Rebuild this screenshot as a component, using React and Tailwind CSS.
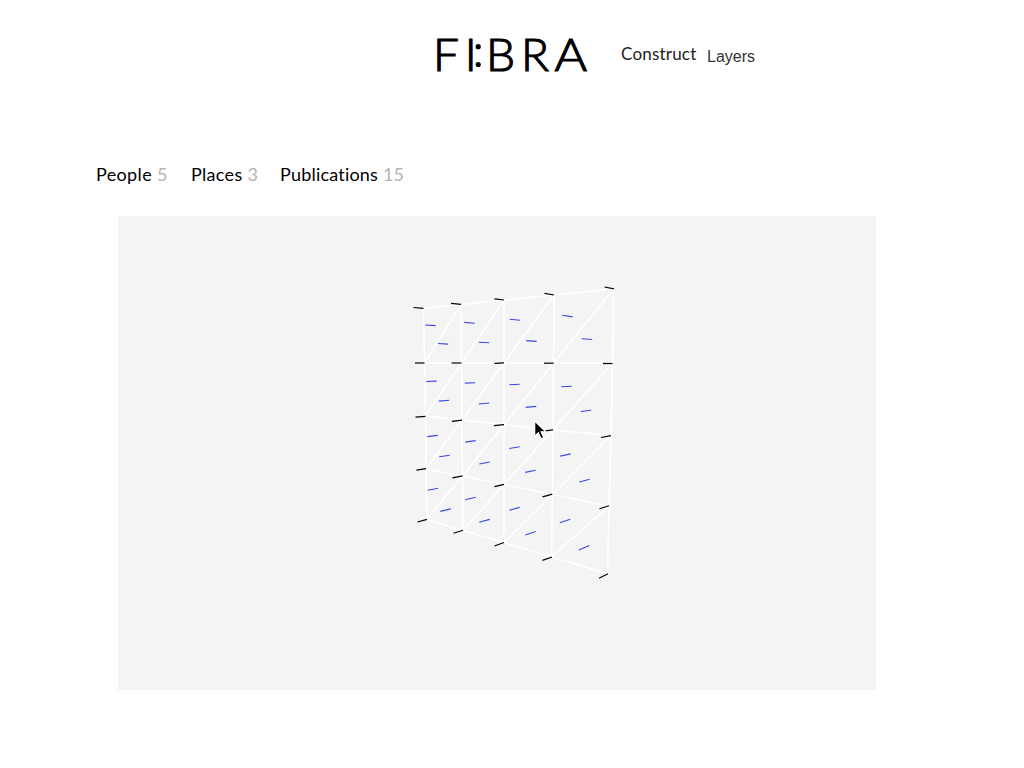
const vertices = [
  [[423.5, 308.5], [461, 304.5], [504, 300], [554, 295], [613.5, 289]],
  [[424.5, 363], [461.5, 363], [504, 363], [553.5, 363.3], [612.5, 363.3]],
  [[425.5, 416], [462, 420], [504, 424.5], [553, 430], [611, 435.5]],
  [[426, 469], [462.5, 476], [504, 484.5], [552.5, 494.5], [609, 506]],
  [[427, 519.5], [463, 530.5], [504, 542.5], [551.5, 557], [607.5, 573.5]],
];

const nodes = [
  [413.5, 307.5, 423.5, 308.3], [451, 303.4, 461, 304.4], [494.5, 298.8, 504, 300], [544.5, 293.4, 554, 295], [604.5, 287, 614, 288.8],
  [415, 363, 424.5, 363], [451.5, 363, 461.5, 363], [494.5, 363.3, 504, 362.9], [544, 363.2, 553.7, 363.2], [603, 363.5, 612.5, 363.5],
  [415.5, 417.1, 425.5, 416.3], [452, 421.4, 462, 420.2], [494, 425.7, 504, 424.6], [543, 431.2, 553, 429.8], [601, 437.5, 611, 435.7],
  [416.5, 470.2, 426, 468.6], [452.5, 477.8, 462.5, 475.9], [494.5, 486.6, 504, 484.4], [542.5, 496.8, 552.3, 494.2], [599.5, 508.8, 609, 505.8],
  [417.5, 522, 427, 519.3], [453.5, 533.2, 463, 530.2], [494.5, 546, 504, 542.5], [542.5, 560.4, 552, 557], [599, 578.3, 608, 573.8],
];

/* centre x, centre y, rise over the length of the mark */
const marks = [
  [430.5, 325.3, -0.6], [469.5, 322.8, -0.8], [515, 319.8, -1], [567.5, 316.1, -1.6],
  [443, 343.8, -0.6], [484, 342.5, -0.6], [531.5, 341, -0.7], [587, 339.1, -0.8],
  [431.5, 381.3, 0.4], [470, 382.9, 0.4], [514.5, 384.5, 0.4], [566.5, 386.5, 0.6],
  [444, 400.7, 0.8], [484, 403.5, 0.9], [531, 406.9, 1], [586, 410.9, 1.2],
  [432.5, 436, 1.2], [470.5, 441.4, 1.5], [514.5, 447.6, 1.7], [565.5, 455, 2.2],
  [444.5, 456, 1.6], [484.5, 463, 2], [530.5, 471.3, 2.1], [584.5, 480.6, 2.7],
  [433, 489.3, 2], [470.5, 498.5, 2.4], [514.5, 508.8, 2.9], [565, 521, 3.4],
  [445.5, 510.1, 2.5], [484.5, 520.8, 2.9], [530.5, 533.3, 3.6], [584, 547.8, 4.4],
];

function meshPath() {
  const parts = [];
  const add = (a, b) => parts.push(`M${a.join(" ")}L${b.join(" ")}`);
  for (let r = 0; r < 5; r++) {
    for (let c = 0; c < 5; c++) {
      if (c < 4) add(vertices[r][c], vertices[r][c + 1]);
      if (r < 4) add(vertices[r][c], vertices[r + 1][c]);
      if (r < 4 && c < 4) add(vertices[r][c + 1], vertices[r + 1][c]);
    }
  }
  return parts.join("");
}

function Logo() {
  return (
    <svg role="img" aria-label="FI:BRA" width="160" height="76" viewBox="432 16 160 76" className="shrink-0 font-['Lato',sans-serif] font-light" fill="#000">
      <g fontSize="46" stroke="#000" strokeWidth="1.2">
        <text x="433" y="71.4">F</text>
        <text x="464.7" y="71.4">I</text>
        <text x="485.9" y="71.4">B</text>
        <text x="521" y="71.4">R</text>
        <text x="554.6" y="71.4" textLength="32.5" lengthAdjust="spacingAndGlyphs">A</text>
      </g>
      <circle cx="478.2" cy="46.7" r="2.6" />
      <circle cx="478.2" cy="64.5" r="2.6" />
    </svg>
  );
}

function Mesh() {
  return (
    <svg width="758" height="474" viewBox="118 216 758 474" className="block">
      <path d={meshPath()} stroke="#fff" strokeWidth="1.5" fill="none" />
      {marks.map(([x, y, d], i) => (
        <line key={i} x1={x - 5.2} y1={y + d / 2} x2={x + 5.2} y2={y - d / 2} stroke="#3c48e6" strokeWidth="1.1" />
      ))}
      {nodes.map(([x1, y1, x2, y2], i) => (
        <line key={i} x1={x1} y1={y1} x2={x2} y2={y2} stroke="#000" strokeWidth="1.2" />
      ))}
      <g transform="translate(534.7 421)">
        <path d="M0 0V15.2L3.7 11.8L6.3 17.8L9 16.6L6.4 10.8H11.2Z" fill="#000" stroke="#fff" strokeWidth="1.2" />
      </g>
    </svg>
  );
}

function Tab({ label, count, className }) {
  return (
    <a className={`shrink-0 whitespace-nowrap ${className}`}>
      {label} <span className="text-[#b4b4b4]">{count}</span>
    </a>
  );
}

export default function App() {
  return (
    <div className="h-screen w-full overflow-hidden bg-white font-['Lato',sans-serif] text-black">
      <header className="flex h-[160px] items-start pt-4 pl-[432px]">
        <Logo />
        <nav className="ml-[29px] flex items-start text-[#222]">
          <a className="mt-[26px] w-[86px] text-[17px] leading-6 tracking-[0.2px]">Construct</a>
          <a className="mt-[29px] font-['Liberation_Sans',sans-serif] text-base leading-6 text-[#333]">Layers</a>
        </nav>
      </header>
      <main>
        <div className="flex h-[56px] items-start pt-[2px] pl-24 text-[18px] leading-6">
          <Tab label="People" count="5" className="w-[95px] tracking-[0.35px]" />
          <Tab label="Places" count="3" className="w-[89px] tracking-[0.3px]" />
          <Tab label="Publications" count="15" className="tracking-[0.2px]" />
        </div>
        <section className="ml-[118px] h-[474px] w-[758px] bg-[#f4f4f4]">
          <Mesh />
        </section>
      </main>
    </div>
  );
}
